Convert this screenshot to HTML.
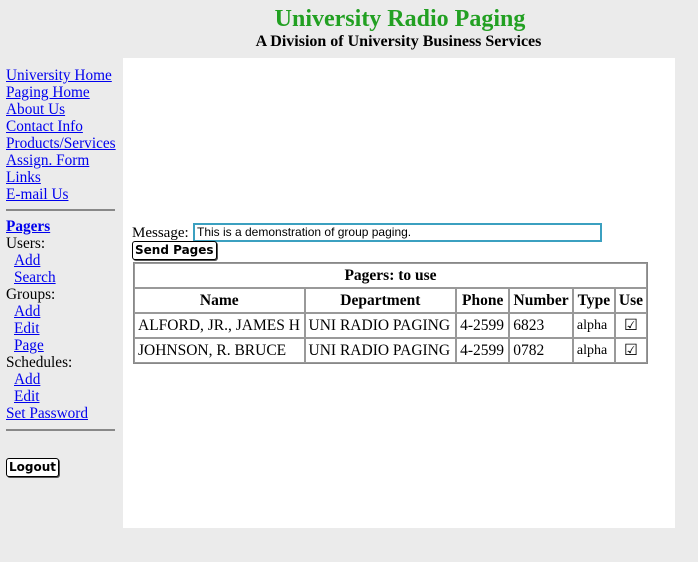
<!DOCTYPE html>
<html><head><style>
body{margin:0;width:698px;height:562px;background:#ebebeb;font-family:"Liberation Serif",serif;font-size:15px;position:relative;overflow:hidden}
.a{position:absolute}
a{color:#0000ee;text-decoration:underline}
#nav{left:6px;top:67px;line-height:17px;font-size:15.3px}
#nav div{height:17px;white-space:nowrap}
.i{padding-left:8px}
hr{border:0;border-top:2px solid #888;margin:0;width:109px}
.btn{font-family:"DejaVu Sans",sans-serif;font-weight:bold;font-size:12px;background:#fff;border:1px solid #000;border-radius:3px;box-shadow:1px 1px 0 #555;padding:1px 2px;line-height:15px}
table{border-collapse:separate;border-spacing:0;border:1px solid #888}
td,th{border:1px solid #999;padding:0 3px;height:23px;white-space:nowrap;font-size:15.5px}
th{font-weight:bold}
</style></head><body>
<div class="a" style="left:0;width:800px;top:6px;text-align:center;color:#22a022;font-weight:bold;font-size:24px">University Radio Paging</div>
<div class="a" style="left:0;width:797px;top:33px;text-align:center;font-weight:bold;font-size:16px">A Division of University Business Services</div>
<div class="a" style="left:123px;top:58px;width:552px;height:470px;background:#fff"></div>
<div class="a" id="nav">
<div><a>University Home</a></div><div><a>Paging Home</a></div><div><a>About Us</a></div><div><a>Contact Info</a></div><div><a>Products/Services</a></div><div><a>Assign. Form</a></div><div><a>Links</a></div><div><a>E-mail Us</a></div>
</div>
<hr class="a" style="left:6px;top:209px">
<div class="a" style="left:6px;top:218px;line-height:17px;font-size:15.3px">
<div><a style="font-weight:bold">Pagers</a></div><div>Users:</div><div class="i"><a>Add</a></div><div class="i"><a>Search</a></div><div>Groups:</div><div class="i"><a>Add</a></div><div class="i"><a>Edit</a></div><div class="i"><a>Page</a></div><div>Schedules:</div><div class="i"><a>Add</a></div><div class="i"><a>Edit</a></div><div><a>Set Password</a></div>
</div>
<hr class="a" style="left:6px;top:429px">
<div class="a btn" style="left:6px;top:458px">Logout</div>
<div class="a" style="left:132px;top:225px">Message:</div>
<div class="a" style="left:193px;top:223px;width:403px;height:15px;border:2px solid #3ba0c0;font-family:'Liberation Sans',sans-serif;font-size:12px;line-height:15px;padding-left:2px">This is a demonstration of group paging.</div>
<div class="a btn" style="left:132px;top:241px">Send Pages</div>
<table class="a" style="left:133px;top:262px;width:515px">
<tr><th colspan="6">Pagers: to use</th></tr>
<tr><th style="width:163px">Name</th><th style="width:145px">Department</th><th style="width:46px">Phone</th><th style="width:56px">Number</th><th style="width:35px">Type</th><th>Use</th></tr>
<tr><td>ALFORD, JR., JAMES H</td><td>UNI RADIO PAGING</td><td>4-2599</td><td>6823</td><td style="font-size:14px">alpha</td><td style="text-align:center">&#9745;</td></tr>
<tr><td>JOHNSON, R. BRUCE</td><td>UNI RADIO PAGING</td><td>4-2599</td><td>0782</td><td style="font-size:14px">alpha</td><td style="text-align:center">&#9745;</td></tr>
</table>
</body></html>
